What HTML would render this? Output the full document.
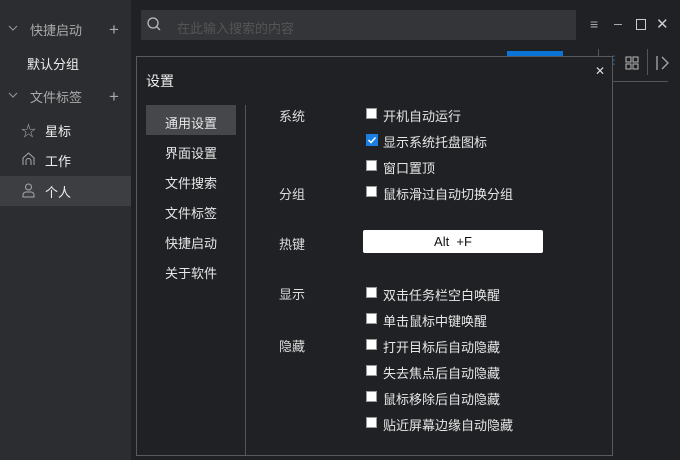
<!DOCTYPE html><html><head><meta charset="utf-8"><style>
*{margin:0;padding:0;box-sizing:border-box}
body{width:680px;height:460px;background:#1f2124;font-family:"Liberation Sans","Noto Sans CJK SC",sans-serif;font-size:13px;color:#ddd;position:relative;overflow:hidden}
.a{position:absolute}
.sb{left:0;top:0;width:131px;height:460px;background:#2b2d30}
.t{position:absolute;white-space:nowrap}
.cb{position:absolute;width:11px;height:11px;background:#fff;border:1px solid #999}
.row{position:absolute;left:383px;white-space:nowrap;color:#e6e6e6}
.lab{position:absolute;left:279px;color:#ddd}
.nav{position:absolute;left:146px;width:90px;text-align:center;color:#e6e6e6}
</style></head><body>
<div class="a sb"></div>
<svg class="a" style="left:8px;top:25px" width="10" height="6"><path d="M1 1l4 4 4-4" fill="none" stroke="#999"/></svg>
<div class="t" style="left:30px;top:20px;color:#aaa">快捷启动</div>
<div class="t" style="left:109px;top:20px;color:#aaa;font-size:17px">+</div>
<div class="t" style="left:27px;top:54px;color:#eee">默认分组</div>
<svg class="a" style="left:8px;top:92px" width="10" height="6"><path d="M1 1l4 4 4-4" fill="none" stroke="#999"/></svg>
<div class="t" style="left:30px;top:87px;color:#aaa">文件标签</div>
<div class="t" style="left:109px;top:87px;color:#aaa;font-size:17px">+</div>
<div class="t" style="left:21px;top:120px;color:#aaa;font-size:15px">☆</div>
<div class="t" style="left:45px;top:121px;color:#eee">星标</div>
<svg class="a" style="left:22px;top:152px" width="13" height="14"><path d="M1 13V6L6.5 1 12 6v7M4 13V9a2.5 2.5 0 0 1 5 0v4" fill="none" stroke="#aaa"/></svg>
<div class="t" style="left:45px;top:151px;color:#eee">工作</div>
<div class="a" style="left:0;top:176px;width:131px;height:30px;background:#3c3e42"></div>
<svg class="a" style="left:22px;top:183px" width="13" height="15"><circle cx="6.5" cy="4" r="3" fill="none" stroke="#aaa"/><path d="M1 14v-2a3 3 0 0 1 3-3h5a3 3 0 0 1 3 3v2z" fill="none" stroke="#aaa"/></svg>
<div class="t" style="left:45px;top:182px;color:#eee">个人</div>
<div class="a" style="left:141px;top:10px;width:435px;height:30px;background:#333538"></div>
<svg class="a" style="left:147px;top:17px" width="14" height="14"><circle cx="6" cy="6" r="5" fill="none" stroke="#bbb" stroke-width="1.3"/><path d="M9.5 9.5L13 13" stroke="#bbb" stroke-width="1.3"/></svg>
<div class="t" style="left:177px;top:18px;color:#555">在此输入搜索的内容</div>
<div class="t" style="left:590px;top:16px;color:#aaa;font-size:14px">≡</div>
<div class="a" style="left:614px;top:24px;width:8px;height:1px;background:#aaa"></div>
<div class="a" style="left:636px;top:19px;width:10px;height:11px;border:1px solid #ccc"></div>
<div class="t" style="left:656px;top:15px;color:#ccc;font-size:15px">✕</div>
<div class="a" style="left:507px;top:51px;width:56px;height:6px;background:#0a74d8"></div>
<div class="a" style="left:598px;top:49px;width:1px;height:8px;background:#555"></div>
<div class="a" style="left:612px;top:81px;width:56px;height:1px;background:#555"></div>
<div class="a" style="left:647px;top:49px;width:1px;height:26px;background:#555"></div>
<div class="t" style="left:612px;top:55px;color:#1a7fe0;font-size:10px;line-height:4px">-<br>-<br>-</div>
<svg class="a" style="left:625px;top:56px" width="14" height="14"><g fill="none" stroke="#bbb"><rect x="1" y="1" width="5" height="5"/><rect x="8" y="1" width="5" height="5"/><rect x="1" y="8" width="5" height="5"/><rect x="8" y="8" width="5" height="5"/></g></svg>
<svg class="a" style="left:656px;top:55px" width="14" height="16"><path d="M1 1v14M6 2l6 6-6 6" fill="none" stroke="#aaa" stroke-width="1.3"/></svg>
<div class="a" style="left:136px;top:56px;width:477px;height:400px;background:#1f2124;border:1px solid #5a5a5a"></div>
<div class="t" style="left:146px;top:71px;color:#eee;font-size:14px">设置</div>
<div class="t" style="left:595px;top:64px;color:#ddd;font-size:12px">✕</div>
<div class="a" style="left:146px;top:105px;width:90px;height:30px;background:#45474b"></div>
<div class="nav" style="top:113px">通用设置</div>
<div class="nav" style="top:143px">界面设置</div>
<div class="nav" style="top:173px">文件搜索</div>
<div class="nav" style="top:203px">文件标签</div>
<div class="nav" style="top:233px">快捷启动</div>
<div class="nav" style="top:263px">关于软件</div>
<div class="a" style="left:245px;top:105px;width:1px;height:350px;background:#555"></div>
<div class="lab" style="top:106px">系统</div>
<div class="lab" style="top:184px">分组</div>
<div class="lab" style="top:234px">热键</div>
<div class="lab" style="top:284px">显示</div>
<div class="lab" style="top:336px">隐藏</div>
<div class="cb" style="left:366px;top:108px"></div><div class="row" style="top:106px">开机自动运行</div>
<div class="a" style="left:366px;top:134px;width:12px;height:12px;background:#1a7fe0"></div>
<svg class="a" style="left:366px;top:134px" width="12" height="12"><path d="M2.5 6l2.5 2.5 4.5-5" fill="none" stroke="#fff" stroke-width="1.5"/></svg>
<div class="row" style="top:132px">显示系统托盘图标</div>
<div class="cb" style="left:366px;top:160px"></div><div class="row" style="top:158px">窗口置顶</div>
<div class="cb" style="left:366px;top:186px"></div><div class="row" style="top:184px">鼠标滑过自动切换分组</div>
<div class="a" style="left:363px;top:230px;width:180px;height:23px;background:#fff;border-radius:2px;color:#111;text-align:center;line-height:23px">Alt&nbsp; +F</div>
<div class="cb" style="left:366px;top:287px"></div><div class="row" style="top:285px">双击任务栏空白唤醒</div>
<div class="cb" style="left:366px;top:313px"></div><div class="row" style="top:311px">单击鼠标中键唤醒</div>
<div class="cb" style="left:366px;top:339px"></div><div class="row" style="top:337px">打开目标后自动隐藏</div>
<div class="cb" style="left:366px;top:365px"></div><div class="row" style="top:363px">失去焦点后自动隐藏</div>
<div class="cb" style="left:366px;top:391px"></div><div class="row" style="top:389px">鼠标移除后自动隐藏</div>
<div class="cb" style="left:366px;top:417px"></div><div class="row" style="top:415px">贴近屏幕边缘自动隐藏</div>
</body></html>
